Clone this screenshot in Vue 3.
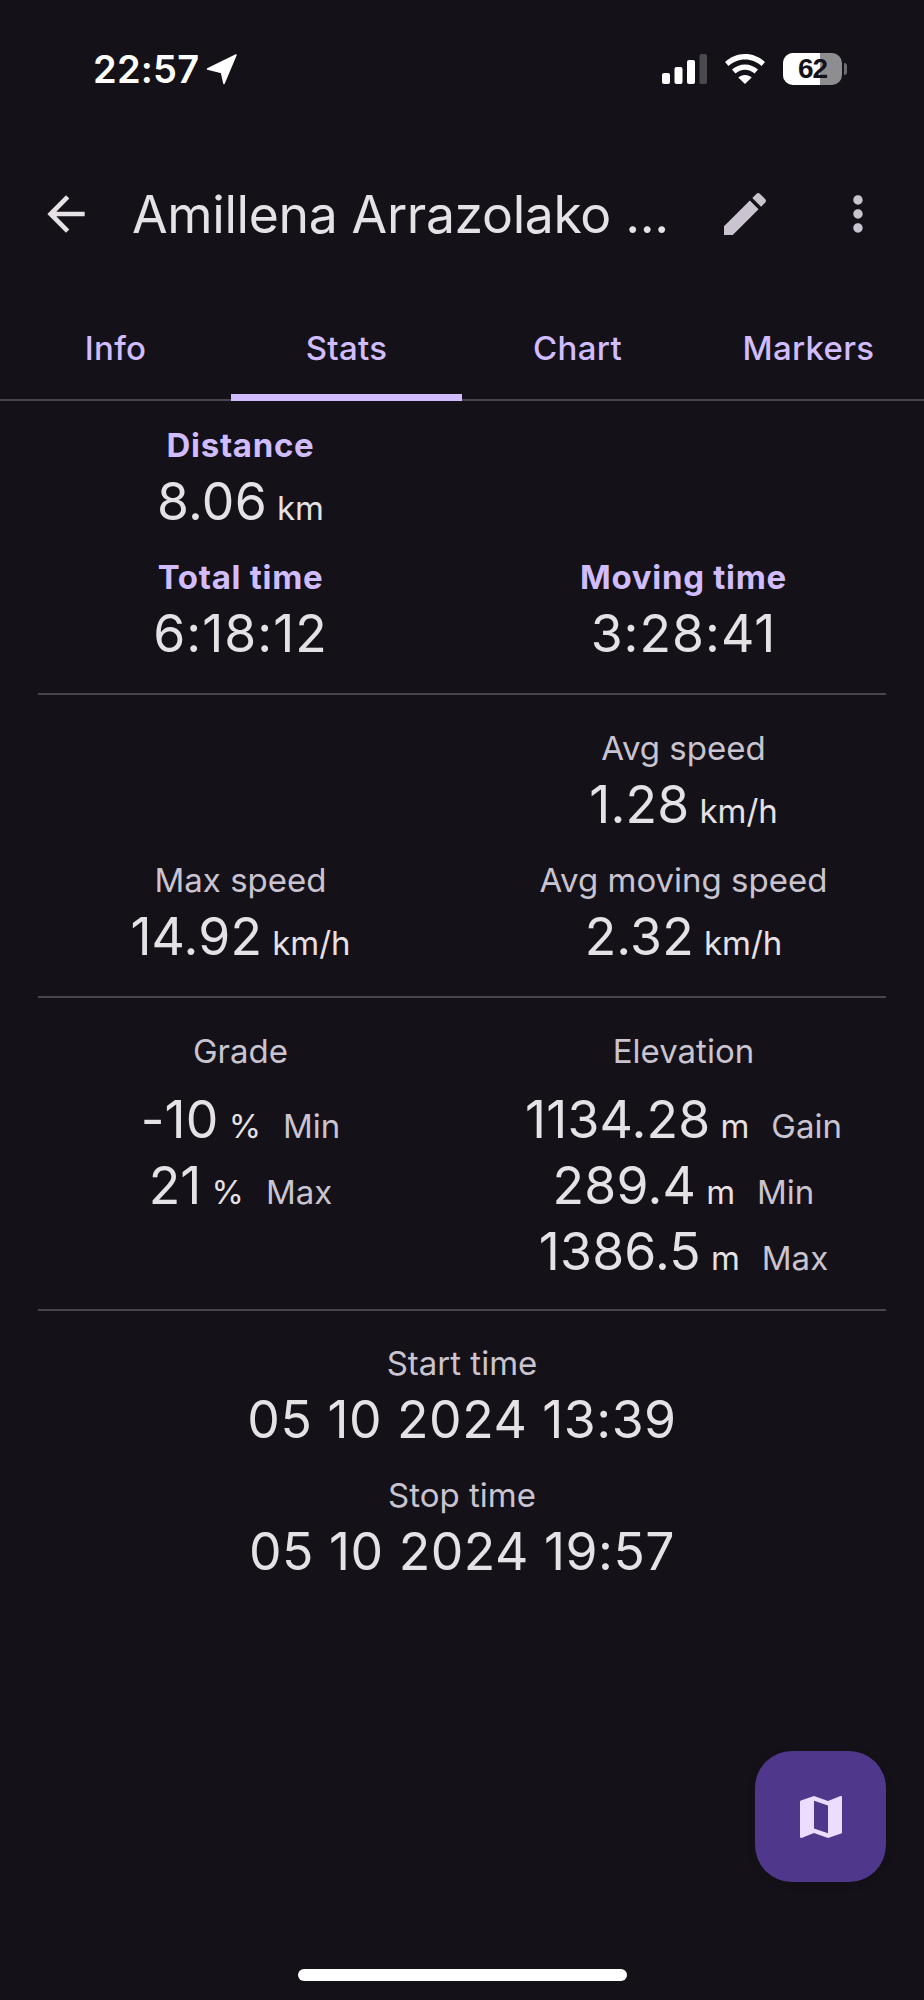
<script setup>
const tabs = [
  { name: 'Info' },
  { name: 'Stats', active: true },
  { name: 'Chart' },
  { name: 'Markers' },
]
const grade = [
  { value: '-10', unit: '%', label: 'Min' },
  { value: '21', unit: '%', label: 'Max' },
]
const elevation = [
  { value: '1134.28', unit: 'm', label: 'Gain' },
  { value: '289.4', unit: 'm', label: 'Min' },
  { value: '1386.5', unit: 'm', label: 'Max' },
]
</script>

<template>
  <div class="page">
    <header class="status">
      <div class="status-left">
        <span class="clock">22:57</span>
        <svg class="loc" viewBox="0 0 31 31"><path d="M30 1 L1.500 15 L15.500 18.500 L18 29.500 Z" fill="#fff" stroke="#fff" stroke-width="1.500" stroke-linejoin="round" /></svg>
      </div>
      <div class="status-right">
        <svg class="signal" viewBox="0 0 45 30">
          <rect x="0" y="19" width="8" height="11" rx="2" fill="#fff" />
          <rect x="12.500" y="13" width="8" height="17" rx="2" fill="#fff" />
          <rect x="25" y="6" width="8" height="24" rx="2" fill="#fff" />
          <rect x="37.500" y="0" width="7.500" height="30" rx="2" fill="#4a494d" />
        </svg>
        <svg class="wifi" viewBox="0 0 40 30">
          <path d="M20 0C12 0 5.500 3 0 8l3.500 4C8 8 13.500 5.500 20 5.500S32 8 36.500 12L40 8C34.500 3 28 0 20 0z" fill="#fff" />
          <path d="M20 10.500c-5 0-9.500 2-13 5l3.500 4c2.500-2.200 6-3.700 9.500-3.700s7 1.500 9.500 3.700l3.500-4c-3.500-3-8-5-13-5z" fill="#fff" />
          <path d="M20 21c-2.700 0-5 1-6.700 2.500L20 30l6.700-6.500C25 22 22.700 21 20 21z" fill="#fff" />
        </svg>
        <div class="battery">
          <div class="battery-body">
            <div class="battery-fill"></div>
            <span class="battery-text">62</span>
          </div>
          <div class="battery-nub"></div>
        </div>
      </div>
    </header>

    <div class="appbar">
      <svg class="icon back" viewBox="0 0 24 24"><path d="M20 11H7.830l5.590-5.590L12 4l-8 8 8 8 1.410-1.410L7.830 13H20v-2z" /></svg>
      <div class="title">Amillena Arrazolako ...</div>
      <svg class="icon edit" viewBox="0 0 24 24"><path d="M3 17.250V21h3.750L17.810 9.940l-3.750-3.750L3 17.250zM20.710 7.040c.39-.39.39-1.020 0-1.410l-2.340-2.340c-.39-.39-1.020-.39-1.410 0l-1.830 1.830 3.750 3.750 1.830-1.830z" /></svg>
      <svg class="icon more" viewBox="0 0 24 24"><path d="M12 8c1.100 0 2-.9 2-2s-.9-2-2-2-2 .9-2 2 .9 2 2 2zm0 2c-1.100 0-2 .9-2 2s.9 2 2 2 2-.9 2-2-.9-2-2-2zm0 6c-1.100 0-2 .9-2 2s.9 2 2 2 2-.9 2-2-.9-2-2-2z" /></svg>
    </div>

    <nav class="tabs">
      <div v-for="t in tabs" :key="t.name" class="tab" :class="{ active: t.active }">{{ t.name }}</div>
    </nav>

    <main class="content">
      <section class="grid first">
        <div class="cell">
          <div class="label strong">Distance</div>
          <div class="value">8.06<span class="unit">km</span></div>
        </div>
        <div class="cell"></div>
        <div class="cell">
          <div class="label strong">Total time</div>
          <div class="value clocky">6:18:12</div>
        </div>
        <div class="cell">
          <div class="label strong">Moving time</div>
          <div class="value clocky">3:28:41</div>
        </div>
      </section>
      <hr class="rule" />
      <section class="grid">
        <div class="cell"></div>
        <div class="cell">
          <div class="label">Avg speed</div>
          <div class="value">1.28<span class="unit">km/h</span></div>
        </div>
        <div class="cell">
          <div class="label">Max speed</div>
          <div class="value">14.92<span class="unit">km/h</span></div>
        </div>
        <div class="cell">
          <div class="label">Avg moving speed</div>
          <div class="value">2.32<span class="unit">km/h</span></div>
        </div>
      </section>
      <hr class="rule" />
      <section class="grid spaced">
        <div class="cell">
          <div class="label">Grade</div>
          <div v-for="g in grade" :key="g.label" class="value">{{ g.value }}<span class="unit">{{ g.unit }}</span><span class="tag">{{ g.label }}</span></div>
        </div>
        <div class="cell">
          <div class="label">Elevation</div>
          <div v-for="e in elevation" :key="e.label" class="value">{{ e.value }}<span class="unit">{{ e.unit }}</span><span class="tag">{{ e.label }}</span></div>
        </div>
      </section>
      <hr class="rule" />
      <section class="times">
        <div class="cell">
          <div class="label">Start time</div>
          <div class="value date">05 10 2024 13:39</div>
        </div>
        <div class="cell">
          <div class="label">Stop time</div>
          <div class="value date">05 10 2024 19:57</div>
        </div>
      </section>
    </main>

    <button class="fab" aria-label="Map">
      <svg viewBox="0 0 24 24"><path d="M20.500 3l-.16.03L15 5.100 9 3 3.360 4.900c-.21.07-.36.25-.36.480V20.500c0 .28.22.5.5.5l.16-.03L9 18.900l6 2.100 5.640-1.900c.21-.07.36-.25.36-.48V3.500c0-.28-.22-.5-.5-.5zM15 19l-6-2.110V5l6 2.110V19z" /></svg>
    </button>
    <div class="home"></div>
  </div>
</template>

<style>
html, body { margin: 0; background: #141218; }
</style>

<style scoped>
.page {
  position: relative;
  width: 924px;
  height: 2000px;
  overflow: hidden;
  background: #141218;
  font-family: Inter, Roboto, "Liberation Sans", sans-serif;
  color: #e6e1e5;
}
.status {
  height: 148px;
  box-sizing: border-box;
  padding: 48px 77px 0 93px;
  display: flex;
  justify-content: space-between;
  align-items: flex-start;
}
.status-left { display: flex; align-items: center; gap: 7px; }
.clock {
  font-weight: 600;
  font-size: 38px;
  letter-spacing: 0.2px;
  line-height: 42px;
  color: #fff;
}
.loc { width: 31px; height: 31px; }
.status-right { display: flex; align-items: center; gap: 18px; padding-top: 5px; }
.signal { width: 45px; height: 30px; }
.wifi { width: 40px; height: 30px; }
.battery { display: flex; align-items: center; gap: 2px; }
.battery-body {
  position: relative;
  width: 59px;
  height: 32px;
  border-radius: 10px;
  overflow: hidden;
  background: #8e8e90;
  display: flex;
  align-items: center;
  justify-content: center;
}
.battery-fill { position: absolute; left: 0; top: 0; bottom: 0; width: 37px; background: #fff; }
.battery-text {
  position: relative;
  font-family: "Liberation Sans", sans-serif;
  font-weight: 700;
  font-size: 28px;
  letter-spacing: -1px;
  color: #141218;
}
.battery-nub { width: 3px; height: 12px; border-radius: 0 3px 3px 0; background: #6d6d70; }

.appbar {
  height: 132px;
  display: flex;
  align-items: center;
  box-sizing: border-box;
  padding-left: 38px;
}
.icon { width: 56px; height: 56px; flex: none; }
.back { fill: #e6e1e5; }
.title {
  width: 542px;
  margin-left: 38px;
  font-size: 51.700px;
  letter-spacing: -0.35px;
  line-height: 66px;
  white-space: nowrap;
  flex: none;
}
.edit { fill: #cac4d0; margin-left: 43px; }
.more { fill: #cac4d0; margin-left: 57px; }

.tabs {
  display: grid;
  grid-template-columns: repeat(4, 1fr);
  height: 121px;
  border-bottom: 2px solid #49454f;
  box-sizing: border-box;
}
.tab {
  position: relative;
  display: flex;
  align-items: center;
  justify-content: center;
  padding-top: 16px;
  font-size: 33px;
  font-weight: 500;
  letter-spacing: 0.3px;
  color: #d0bcff;
}
.tab.active::after {
  content: "";
  position: absolute;
  left: 0;
  right: 0;
  bottom: -2px;
  height: 7px;
  background: #d0bcff;
}

.content { display: flex; flex-direction: column; }
.grid {
  display: grid;
  grid-template-columns: 1fr 1fr;
  row-gap: 19px;
  padding: 31px 19px 25px;
}
.grid.first { padding-top: 22px; }
.grid.spaced .label { margin-bottom: 12px; }
.cell { text-align: center; min-height: 113px; }
.label {
  font-size: 33px;
  line-height: 45px;
  color: #cac4d0;
}
.label.strong { font-weight: 700; letter-spacing: 0.7px; color: #d0bcff; }
.value {
  font-size: 51.700px;
  line-height: 66px;
  letter-spacing: 0.2px;
  color: #e6e1e5;
  white-space: nowrap;
}
.value.clocky { letter-spacing: 1px; }
.value.date { letter-spacing: 0.5px; }
.unit {
  font-size: 33px;
  line-height: 0;
  letter-spacing: 0;
  margin-left: 10px;
  color: #e6e1e5;
}
.tag {
  font-size: 33px;
  line-height: 0;
  letter-spacing: 0;
  margin-left: 22px;
  color: #cac4d0;
}
.rule {
  border: 0;
  height: 2px;
  margin: 0 38px;
  background: #49454f;
}
.times {
  display: flex;
  flex-direction: column;
  gap: 19px;
  padding-top: 30px;
}
.fab {
  position: absolute;
  left: 755px;
  top: 1751px;
  width: 131px;
  height: 131px;
  border: 0;
  padding: 0;
  border-radius: 37px;
  background: #4f378b;
  display: flex;
  align-items: center;
  justify-content: center;
  box-shadow: 0 2px 8px rgba(0, 0, 0, 0.15);
}
.fab svg { width: 56px; height: 56px; fill: #eaddff; }
.home {
  position: absolute;
  left: 298px;
  top: 1969px;
  width: 329px;
  height: 12px;
  border-radius: 6px;
  background: #fff;
}
</style>
